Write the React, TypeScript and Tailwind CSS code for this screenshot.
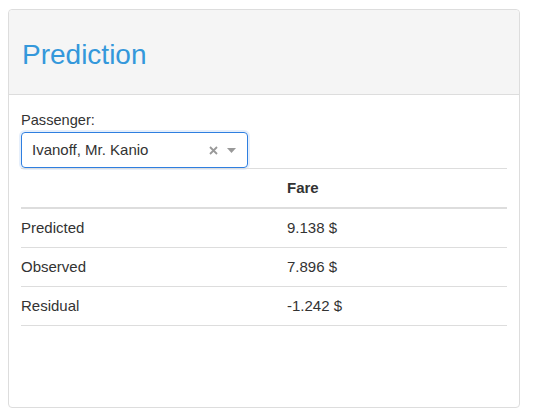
import React from "react";

const rows = [
  { label: "Predicted", fare: "9.138 $" },
  { label: "Observed", fare: "7.896 $" },
  { label: "Residual", fare: "-1.242 $" },
];

export default function App() {
  return (
    <div className="min-h-screen bg-white pl-2 pt-[9px] text-[#333] font-['Liberation_Sans',Arial,sans-serif]">
      <div className="flex h-[399px] w-[512px] flex-col rounded border border-[#ddd]">
        {/* Panel heading */}
        <div className="rounded-t border-b border-[#ddd] bg-[#f5f5f5] px-[13px] pt-[29px] pb-[24px]">
          <h1 className="text-[28px] leading-[31px] text-[#3498db]">Prediction</h1>
        </div>

        {/* Panel body */}
        <div className="px-3 pt-[15px]">
          <label className="block text-[14.6px] leading-[20px]">Passenger:</label>
          <div className="mt-[2px] flex h-[36px] w-[227px] items-center rounded border border-[#2f7fe0] pl-[10px] pr-[11px] shadow-[0_0_0_2px_rgba(47,127,224,0.12)]">
            <span className="flex-1 text-[15px]">Ivanoff, Mr. Kanio</span>
            <svg width="9" height="9" viewBox="0 0 9 9" className="mr-[9px]">
              <path d="M1 1L8 8M8 1L1 8" stroke="#999" strokeWidth="1.8" />
            </svg>
            <svg width="9" height="5" viewBox="0 0 9 5">
              <path d="M0 0H9L4.5 5Z" fill="#999" />
            </svg>
          </div>

          <div className="text-[15px]">
            <div className="grid grid-cols-[266px_1fr] border-t border-b-2 border-[#ddd] h-[41px] items-center font-bold">
              <div />
              <div>Fare</div>
            </div>
            {rows.map((r) => (
              <div
                key={r.label}
                className="grid grid-cols-[266px_1fr] h-[39px] items-center border-b border-[#ddd]"
              >
                <div>{r.label}</div>
                <div>{r.fare}</div>
              </div>
            ))}
          </div>
        </div>
      </div>
    </div>
  );
}
